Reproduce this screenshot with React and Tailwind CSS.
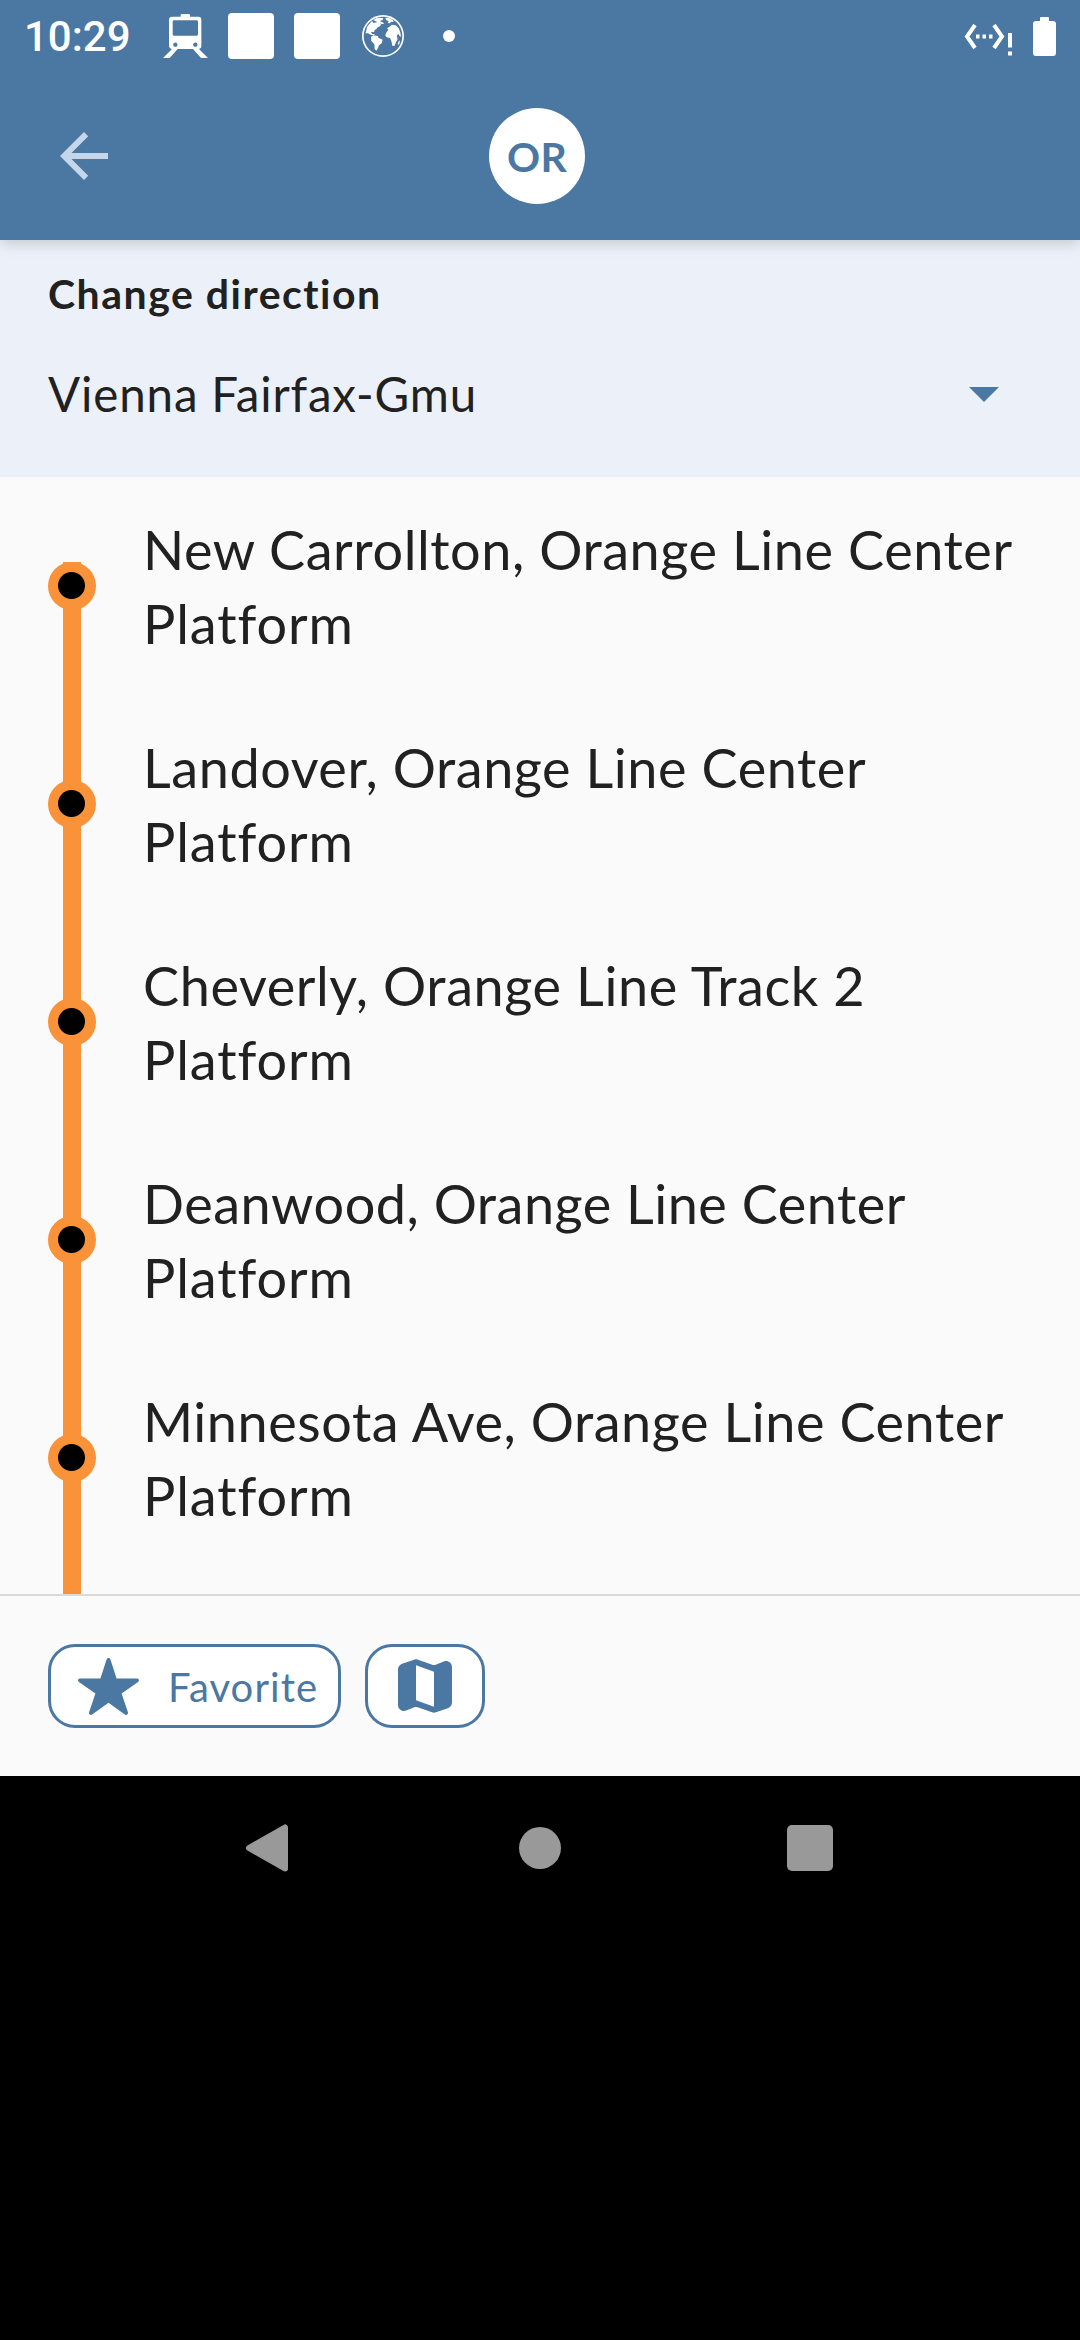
import React from "react";
import { IoStar } from "react-icons/io5";

const stops = [
  { first: "New Carrollton, Orange Line Center", spacing: "tracking-[0.57px]" },
  { first: "Landover, Orange Line Center", spacing: "tracking-[0.57px]" },
  { first: "Cheverly, Orange Line Track 2", spacing: "tracking-[0.6px]" },
  { first: "Deanwood, Orange Line Center", spacing: "tracking-[0.5px]" },
  { first: "Minnesota Ave, Orange Line Center", spacing: "tracking-[0.56px]" },
];

function TrainIcon() {
  return (
    <svg className="ml-[32px] h-[44px] w-[45px]" viewBox="0 0 135 132" fill="#fff">
      <path
        fillRule="evenodd"
        d="M53 8V3a3 3 0 0 1 3-3H78a3 3 0 0 1 3 3V8H106a9 9 0 0 1 9 9V97a9 9 0 0 1-9 8H108L135 132H114L90 105H44L20 132H0L27 105H26a9 9 0 0 1-8-8V17a9 9 0 0 1 9-9ZM33 19a4 4 0 0 0-4 4V61a4 4 0 0 0 4 4H101a4 4 0 0 0 4-4V23a4 4 0 0 0-4-4ZM37 85.500a6.500 6.500 0 1 0 0 13a6.500 6.500 0 1 0 0-13ZM97 85.500a6.500 6.500 0 1 0 0 13a6.500 6.500 0 1 0 0-13Z"
      />
    </svg>
  );
}

function GlobeIcon() {
  return (
    <svg className="ml-[22px] size-[42px]" viewBox="0 0 126 126" fill="#fff">
      <circle cx="63" cy="63" r="60.500" fill="none" stroke="#fff" strokeWidth="5" />
      <path d="M12 50L16 34L30 18L35 24L47 21L53 23L57 29L54 34L48 36L43 42L38 45L36 52L30 50L27 53L31 57L38 58L37 61L26 59L18 55L10 55Z" />
      <path d="M34 16L44 9L55 8L64 10L62 15L53 18L60 21L67 25L60 28L52 24L41 19Z" />
      <path d="M70 8L80 8L92 14L95 21L87 20L84 25L77 24L80 18L72 15Z" />
      <path d="M27 66L34 61L47 63L50 69L62 74L59 85L51 91L48 99L43 107L38 102L37 88L28 78Z" />
      <path d="M72 54L79 44L75 40L82 35L90 29L101 31L110 40L115 52L117 66L112 62L109 56L104 62L107 72L102 82L97 93L91 92L88 78L84 69L74 67L70 62Z" />
      <path d="M109 81L114 76L112 87L107 90Z" />
    </svg>
  );
}

function EthernetIcon() {
  return (
    <svg className="h-[32px] w-[49px]" viewBox="0 0 49 32" fill="none" stroke="#fff">
      <path d="M11 1L3 12.500L11 24M30 1L38 12.500L30 24" strokeWidth="4" />
      <path d="M12 12.500H15.500M18.500 12.500H22M25 12.500H28.500" strokeWidth="4" />
      <path d="M46 9V23.500M46 27.500V31.500" strokeWidth="4" />
    </svg>
  );
}

function StatusBar() {
  return (
    <div className="flex h-[72px] items-center pr-[24px] pl-[24px]">
      <span className="pt-[2px] font-['Roboto'] text-[42px] leading-[70px] font-medium text-white">10:29</span>
      <TrainIcon />
      <span className="ml-[20px] size-[46px] rounded-[4px] bg-white" />
      <span className="ml-[20px] size-[46px] rounded-[4px] bg-white" />
      <GlobeIcon />
      <span className="ml-[39px] size-[12px] rounded-full bg-white" />
      <div className="ml-auto flex items-center gap-[20px]">
        <span className="pt-[7px]">
          <EthernetIcon />
        </span>
        <span className="flex flex-col items-center">
          <span className="h-[4px] w-[9px] rounded-t-[1px] bg-white" />
          <span className="h-[35px] w-[23px] rounded-[3px] bg-white" />
        </span>
      </div>
    </div>
  );
}

function Header() {
  return (
    <header className="relative z-10 h-[240px] bg-[#4b77a3] shadow-[0_3px_14px_rgba(0,0,0,0.18)]">
      <StatusBar />
      <div className="grid h-[168px] grid-cols-[1fr_96px_1fr] items-center pr-[6px]">
        <svg className="ml-[48px] size-[72px]" viewBox="0 0 24 24" fill="#c5d5ea">
          <path d="M20 11H7.830l5.590-5.590L12 4l-8 8 8 8 1.410-1.410L7.830 13H20v-2z" />
        </svg>
        <div className="flex size-[96px] items-center justify-center rounded-full bg-white pt-[1px] text-[41px] font-bold tracking-[0.3px] text-[#4b77a3]">
          OR
        </div>
      </div>
    </header>
  );
}

function DirectionPicker() {
  return (
    <section className="h-[237px] bg-[#ecf1f9] pl-[48px] text-[#212121]">
      <h2 className="pt-[27px] text-[41px] leading-[54px] font-bold tracking-[1.5px]">Change direction</h2>
      <div className="mt-[40px] flex h-[66px] items-center justify-between pr-[81px]">
        <span className="text-[47.5px] leading-[66px] tracking-[0.85px]">Vienna Fairfax-Gmu</span>
        <svg className="h-[15px] w-[30px]" viewBox="0 0 30 15" fill="#4b77a3">
          <path d="M0 0H30L15 15Z" />
        </svg>
      </div>
    </section>
  );
}

function StopMarker() {
  return (
    <div className="grid h-[218px] shrink-0 grid-cols-[48px]">
      <span className="col-start-1 row-start-1 ml-[15px] w-[18px] bg-[#f99239]" />
      <span className="col-start-1 row-start-1 flex size-[48px] rounded-full bg-[#f99239] pt-[10px] pl-[10px]">
        <span className="size-[27px] rounded-full bg-black" />
      </span>
    </div>
  );
}

function StopList() {
  return (
    <main className="flex h-[1117px] overflow-hidden bg-[#fafafa] pl-[48px] text-[#212121]">
      <div className="flex w-[48px] flex-col pt-[85px]">
        {stops.map((stop) => (
          <StopMarker key={stop.first} />
        ))}
      </div>
      <ul className="pt-[36px] pl-[47px]">
        {stops.map((stop) => (
          <li key={stop.first} className="h-[218px] text-[54px] leading-[74px] whitespace-nowrap">
            <div className={stop.spacing}>{stop.first}</div>
            <div className="tracking-[0.9px]">Platform</div>
          </li>
        ))}
      </ul>
    </main>
  );
}

function Actions() {
  return (
    <footer className="flex h-[182px] gap-[24px] border-t-2 border-[#dadada] bg-[#fafafa] pt-[48px] pl-[48px] text-[#4b77a3]">
      <button className="flex h-[84px] w-[293px] items-center rounded-[27px] border-3 border-[#4b77a3] bg-white pl-[25px]">
        <IoStar className="size-[65px]" />
        <span className="ml-[27px] pt-[2px] text-[40px] leading-[54px] tracking-[1.1px]">Favorite</span>
      </button>
      <button className="flex h-[84px] w-[120px] items-center justify-center rounded-[27px] border-3 border-[#4b77a3] bg-white">
        <svg className="size-[72px]" viewBox="0 0 24 24" fill="currentColor">
          <path d="M14.650 4.980l-5-1.750c-.42-.15-.88-.15-1.300-.01L4.360 4.560C3.550 4.840 3 5.600 3 6.460v11.850c0 1.410 1.410 2.370 2.720 1.860l2.930-1.140c.22-.09.47-.09.69-.01l5 1.750c.42.15.88.15 1.300.01l3.990-1.340c.81-.27 1.360-1.040 1.360-1.900V5.690c0-1.410-1.410-2.370-2.720-1.860l-2.930 1.140c-.22.08-.46.09-.69.01zM15 18.890l-6-2.110V5.110l6 2.110v11.670z" />
        </svg>
      </button>
    </footer>
  );
}

function SystemNav() {
  return (
    <nav className="flex h-[144px] items-center pl-[246px]">
      <svg className="h-[48px] w-[42px]" viewBox="0 0 42 48" fill="#999" stroke="#999" strokeWidth="6" strokeLinejoin="round">
        <path d="M3 24L39 3.500V44.500Z" />
      </svg>
      <span className="ml-[231px] size-[42px] rounded-full bg-[#999]" />
      <span className="ml-[226px] size-[46px] rounded-[5px] bg-[#999]" />
    </nav>
  );
}

export default function App() {
  return (
    <div className="h-[2340px] w-[1080px] overflow-hidden bg-black font-['Lato','Open_Sans',sans-serif]">
      <Header />
      <DirectionPicker />
      <StopList />
      <Actions />
      <SystemNav />
    </div>
  );
}
